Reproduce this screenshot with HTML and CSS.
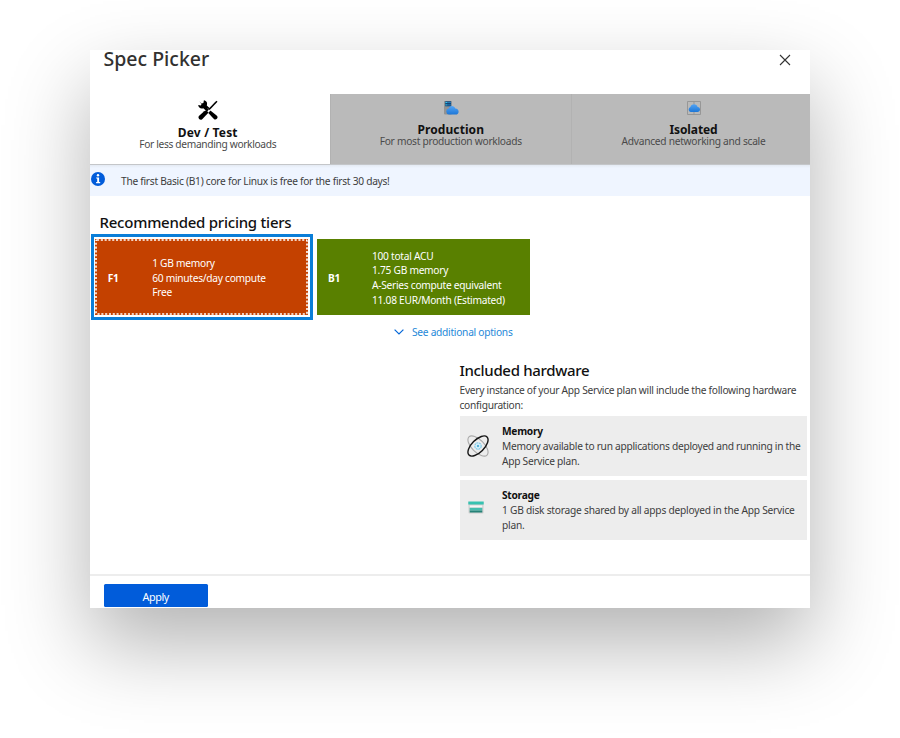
FILE: index.html
```
<!DOCTYPE html>
<html lang="en">
<head>
<meta charset="utf-8">
<title>Spec Picker</title>
<link rel="stylesheet" href="styles.css">
</head>
<body>
<main class="panel">
  <header class="header">
    <h1 class="title">Spec Picker</h1>
    <svg class="close" viewBox="0 0 12 12" aria-label="Close"><path d="M1 1l10 10M11 1L1 11" stroke="#333" stroke-width="1.1" fill="none"/></svg>
  </header>
  <nav class="tabs">
    <div class="tab active">
      <svg class="tab-icon" viewBox="0 0 20 20"><path d="M1.2 1.2 3.6 3.6 5.4 3 5.9.3C8.6.7 9.7 3 8.8 5.4L12 8.6 9 11.4 5.3 8.2C2.8 9.2 .5 7.8.2 5.1L2.9 5.6 3.5 3.9Z"/><path d="M8.1 10.2 10.6 12.6 4.2 19.2Q2.6 20.4 1.1 18.9 -.1 17.3 .9 15.9L6.2 11.2Z"/><path d="M12.4 10.4 18.9 15.7a2.2 2.2 0 0 1-3 3.2L10.3 13Z"/><path d="M10.2 9.2 17.1 2 18.5 .7 19.5 1.7 18.3 3 11.4 10.2Z"/><path d="M9.6 8.2 12.4 11" stroke="#fff" stroke-width=".4"/></svg>
      <b class="tab-name">Dev / Test</b>
      <p class="tab-desc">For less demanding workloads</p>
    </div>
    <div class="tab production">
      <svg class="tab-icon" viewBox="0 0 16 16"><defs><linearGradient id="cloud" x2="0" y2="1"><stop stop-color="#52a4f5"/><stop offset="1" stop-color="#1d76d6"/></linearGradient></defs><path d="M1 1h7.5v13.5H2a1 1 0 0 1-1-1Z" fill="#929292"/><path d="M2.2 1.3h6v5h-6Z" fill="#124578"/><path d="M2.4 2.5h2M2.4 4.9h2" stroke="#35c5e9" stroke-width="1"/><path d="M4.4 2.5h3.6M4.4 4.9h3.6" stroke="#2e86c4" stroke-width=".8"/><path d="M6 14.6a3.2 3.2 0 0 1-.2-6.3C6.8 5 11.4 5.2 12.3 8.6c4.4.2 4.4 6 .2 6Z" fill="url(#cloud)"/></svg>
      <b class="tab-name">Production</b>
      <p class="tab-desc">For most production workloads</p>
    </div>
    <div class="tab isolated">
      <svg class="tab-icon" viewBox="0 0 16 16"><path d="M1.5 1.5h13v13h-13ZM8 1.5v3M8 12v2.5" fill="none" stroke="#979797"/><path d="M4.6 12.1a2.6 2.6 0 0 1-.2-5C5.2 3.3 10.8 3.3 11.6 7.1 15 7.3 14.8 12.1 11.4 12.1Z" fill="url(#cloud)"/></svg>
      <b class="tab-name">Isolated</b>
      <p class="tab-desc">Advanced networking and scale</p>
    </div>
  </nav>
  <div class="info">
    <svg class="info-icon" viewBox="0 0 14 14"><circle cx="7" cy="7" r="7" fill="#015cda"/><circle cx="7" cy="3.2" r="1.2" fill="#fff"/><path d="M5.2 5.4h2.9v4.7h1.1v1.2H5.1v-1.2h1.1V6.6h-1Z" fill="#fff"/></svg>
    <p class="info-text">The first Basic (B1) core for Linux is free for the first 30 days!</p>
  </div>
  <h2 class="heading tiers-heading">Recommended pricing tiers</h2>
  <section class="tiers">
    <div class="tier-focus">
      <div class="tier free">
        <svg class="dots"><rect x="1" y="1" width="211" height="74" rx="1"/></svg>
        <b class="tier-name">F1</b>
        <ul class="specs"><li>1 GB memory</li><li>60 minutes/day compute</li><li>Free</li></ul>
      </div>
    </div>
    <div class="tier basic">
      <b class="tier-name">B1</b>
      <ul class="specs"><li>100 total ACU</li><li>1.75 GB memory</li><li>A-Series compute equivalent</li><li>11.08 EUR/Month (Estimated)</li></ul>
    </div>
  </section>
  <a class="more"><svg class="chevron" viewBox="0 0 10 6"><path d="M.6.6 5 5 9.4.6" fill="none" stroke="#0668d8" stroke-width="1.2"/></svg>See additional options</a>
  <section class="hardware">
    <h2 class="heading hardware-heading">Included hardware</h2>
    <p class="intro">Every instance of your App Service plan will include the following hardware<br>configuration:</p>
    <article class="card">
      <svg class="memory" viewBox="0 0 22 22"><g fill="none"><ellipse cx="11" cy="11" rx="12.8" ry="6.2" transform="rotate(45 11 11)" stroke="#aaa" stroke-width="1.1"/><circle cx="11" cy="11" r="3.2" fill="#d9f1fb" stroke="#7cc8e8" stroke-width="1.1" stroke-dasharray="2 .6"/><circle cx="11" cy="11" r="1.2" fill="#59b4d9"/><ellipse cx="11" cy="11" rx="12.8" ry="6.2" transform="rotate(-45 11 11)" stroke="#161616" stroke-width="1.4"/></g></svg>
      <div class="card-text"><b>Memory</b><p>Memory available to run applications deployed and running in the<br>App Service plan.</p></div>
    </article>
    <article class="card">
      <svg class="storage" viewBox="0 0 16 13"><path d="M.5 1h15v10.5a1 1 0 0 1-1 1h-13a1 1 0 0 1-1-1Z" fill="#cfcfcf"/><path d="M.3.5h15.4v3H.3Z" fill="#37c2b1"/><path d="M1.7 4.4h12.6v2.2H1.7Z" fill="#f6f6f6"/><path d="M1.7 6.8h12.6v2.8H1.7Z" fill="#45bdae"/><path d="M1.7 9.6h12.6v1.9H1.7Z" fill="#258277"/></svg>
      <div class="card-text wide"><b>Storage</b><p>1 GB disk storage shared by all apps deployed in the App Service<br>plan.</p></div>
    </article>
  </section>
  <footer class="footer"><button class="apply">Apply</button></footer>
</main>
</body>
</html>
```
FILE: styles.css
```
* { box-sizing: border-box; }
body { margin: 0; height: 738px; overflow: hidden; background: #fff; padding: 50px 90px; font: 10.2px/14.7px "Noto Sans", sans-serif; letter-spacing: -.27px; color: #3d3d3d; }
h1, h2, p, ul { margin: 0; padding: 0; }
ul { list-style: none; }
svg { display: block; flex: none; }
.panel { width: 720px; height: 558px; display: flex; flex-direction: column; background: #fff; box-shadow: 0 36px 78px rgba(0,0,0,.3); white-space: nowrap; }
.header { height: 44px; display: flex; justify-content: space-between; padding: 0 19px 0 13.5px; flex: none; }
.title { font-size: 19.5px; line-height: 18px; font-weight: 500; color: #323130; letter-spacing: 0; }
.close { width: 12px; height: 12px; margin-top: 4px; }
.tabs { display: grid; grid-template-columns: 239.5px 241.5px 239px; height: 71px; flex: none; border-bottom: 1px solid #c4c6c9; }
.tab { display: flex; flex-direction: column; align-items: center; padding-top: 6px; background: #bababa; border-left: 1px solid #b2b2b2; }
.tab.active { background: #fff; border-left: 0; padding: 6px 4px 0 0; }
.tab.isolated { padding-left: 5px; }
.tab-icon { width: 16px; height: 16px; }
.active .tab-icon { width: 20px; height: 20px; }
.tab-name { font-size: 12px; line-height: 12px; color: #111; margin-top: 8px; letter-spacing: .1px; }
.isolated .tab-name { letter-spacing: -.1px; }
.active .tab-name { margin-top: 7px; letter-spacing: .17px; }
.tab-desc { line-height: 11px; color: #4a4a4a; }
.active .tab-desc { letter-spacing: -.33px; }
.info { height: 31px; flex: none; display: flex; background: linear-gradient(#e4eaf3, #eff5ff 3px); padding: 7px 0 0 1px; }
.info-icon { width: 14px; height: 14px; }
.info-text { margin: 2px 0 0 16px; }
.heading { font-size: 15px; line-height: 20px; font-weight: 500; color: #111; letter-spacing: -.24px; }
.tiers-heading { margin: 16px 0 0 9.5px; }
.hardware-heading { letter-spacing: -.33px; }
.tiers { display: flex; margin-top: 2px; align-items: center; gap: 4px; height: 86px; }
.tier-focus { width: 222.5px; height: 86px; margin-left: .5px; border: 3px solid #0a7ed8; padding: 2px 1.5px; }
.tier { position: relative; width: 213px; height: 76px; display: grid; grid-template-columns: 44px 1fr; align-items: center; padding: 2px 0 0 11px; color: #fff; }
.free { padding-left: 12.8px; grid-template-columns: 44.4px 1fr; background: #c44100; }
.basic { background: #598000; }
.dots { position: absolute; inset: 0; width: 213px; height: 76px; }
.dots rect { fill: none; stroke: #fff; stroke-width: 1.6; stroke-dasharray: 2.1 1.7; }
.more { display: flex; align-items: center; gap: 8px; margin: 5px 0 0 304px; color: #2588d8; height: 15px; }
.chevron { width: 10px; height: 6px; margin-top: -1px; }
.hardware { margin: 20px 3px 0 369.5px; }
.intro { margin: 3px 0 4px; }
.card { height: 60px; background: #ededed; display: flex; align-items: center; margin-bottom: 4px; padding-left: 7.5px; }
.card b { color: #111; display: block; }
.memory { width: 22px; height: 22px; }
.storage { width: 16px; height: 13px; margin: 0 5.5px 5px .5px; }
.card-text { margin-left: 13px; }
.wide p { letter-spacing: -.23px; }
.footer { margin-top: auto; height: 34px; border-top: 2px solid #ededed; padding: 8px 0 0 13.5px; }
.apply { display: block; width: 104.5px; height: 23px; border: 0; border-radius: 1.5px; background: #015cda; color: #fff; font: 10.8px/16px "Noto Sans", sans-serif; letter-spacing: -.4px; padding: 3px 0 0; }
```
